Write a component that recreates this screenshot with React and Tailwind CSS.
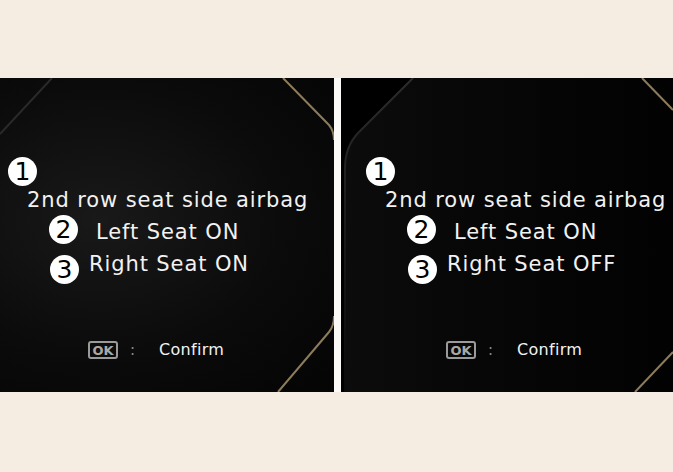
import React from 'react';

const font = { fontFamily: '"DejaVu Sans", "Noto Sans", sans-serif' };

const Num = ({ n, className = '' }) => (
  <div
    className={`w-[29px] h-[29px] rounded-full bg-white text-[#000000] flex items-center justify-center text-[25px] leading-none font-normal ${className}`}
  >
    {n}
  </div>
);

const Screen = ({ status, shift, children }) => (
  <div className="relative h-full overflow-hidden text-[#f2f2f2]" style={font}>
    {children}
    <div className="relative flex flex-col" style={{ marginLeft: shift }}>
      <Num n="1" className="mt-[79px] ml-[8px]" />
      <div className="mt-[2px] ml-[27px] text-[21px] leading-[24px] tracking-[0.9px] whitespace-nowrap">
        2nd row seat side airbag
      </div>
      <div className="mt-[3px] flex items-center">
        <Num n="2" className="ml-[49px]" />
        <span className="ml-[18px] mt-[4px] text-[21px] leading-[24px] tracking-[0.9px]">Left Seat ON</span>
      </div>
      <div className="mt-[5px] flex items-center">
        <Num n="3" className="ml-[50px] mt-[6px]" />
        <span className="ml-[10px] -mt-[5px] text-[21px] leading-[24px] tracking-[0.9px]">Right Seat {status}</span>
      </div>
      <div className="mt-[57px] flex items-center">
        <div className="ml-[88px] w-[30px] h-[18px] border-2 border-[#9a9a9a] rounded-[3px] text-[#a8a8a8] text-[13px] leading-none font-bold flex items-center justify-center">
          OK
        </div>
        <span className="ml-[12px] text-[#8c8c8c] text-[15px] leading-none">:</span>
        <span className="ml-[24px] text-[16px] leading-none tracking-[0.3px]">Confirm</span>
      </div>
    </div>
  </div>
);

export default function App() {
  return (
    <div className="w-[673px] h-[472px] bg-[#f5ede2] flex flex-col">
      <div className="h-[78px]" />
      <div className="h-[314px] flex">
        <div className="w-[334px] bg-[radial-gradient(ellipse_at_30%_45%,#191919_0%,#0b0b0b_55%,#040404_100%)]">
          <Screen status="ON" shift={0}>
            <svg className="absolute inset-0" width="334" height="314" viewBox="0 0 334 314">
              <path d="M52 0 L0 56" stroke="#2a2a2a" strokeWidth="2" fill="none" />
              <path d="M283 0 L329 47 Q334 53 334 62" stroke="#8d7c5c" strokeWidth="2" fill="none" />
              <path d="M278 314 L329 254 Q334 248 334 238" stroke="#8d7c5c" strokeWidth="2" fill="none" />
            </svg>
          </Screen>
        </div>
        <div className="w-[7px] bg-[#fcfaf6]" />
        <div className="flex-1 bg-[linear-gradient(90deg,#0c0c0c_0%,#070707_40%,#020202_100%)]">
          <Screen status="OFF" shift={17}>
            <svg className="absolute inset-0" width="332" height="314" viewBox="0 0 332 314">
              <defs>
                <linearGradient id="edge" x1="0" y1="0" x2="0" y2="1">
                  <stop offset="0" stopColor="#2c2c2c" />
                  <stop offset="0.45" stopColor="#1c1c1c" />
                  <stop offset="1" stopColor="#0a0a0a" />
                </linearGradient>
              </defs>
              <path d="M0 0 H72 L18 54 Q4 68 4 90 V314 H0 Z" fill="#000" />
              <path d="M72 0 L18 54 Q4 68 4 90 V314" stroke="url(#edge)" strokeWidth="2" fill="none" />
              <path d="M301 0 L332 32" stroke="#8d7c5c" strokeWidth="2" fill="none" />
              <path d="M294 314 L332 274" stroke="#8d7c5c" strokeWidth="2" fill="none" />
            </svg>
          </Screen>
        </div>
      </div>
    </div>
  );
}
